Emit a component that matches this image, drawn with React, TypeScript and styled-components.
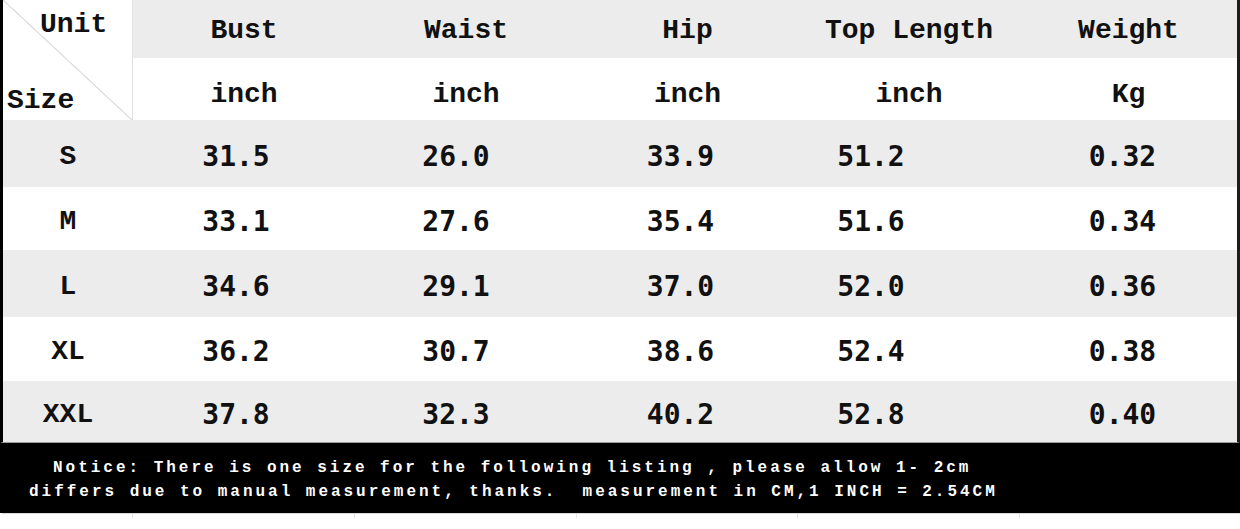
import React from 'react';
import styled, { createGlobalStyle } from 'styled-components';

const GlobalStyle = createGlobalStyle`
  html, body { margin: 0; padding: 0; background: #fff; }
  body { width: 1240px; height: 529px; overflow: hidden; }
  * { box-sizing: border-box; }
`;

const COLS = '130px 222px 222px 221px 222px 217px';

const Sheet = styled.div`
  width: 1240px;
  display: flex;
  flex-direction: column;
  font-family: "Liberation Mono", "DejaVu Sans Mono", monospace;
  color: #111;
`;

const Table = styled.div`
  display: flex;
  flex-direction: column;
  border-left: 3px solid #000;
  border-right: 3px solid #1c1c1c;
  border-bottom: 1px solid #9c9c9c;
`;

const Header = styled.div`
  display: grid;
  grid-template-columns: ${COLS};
  grid-template-rows: 58px 62px;
`;

const Corner = styled.div`
  grid-row: 1 / span 2;
  grid-column: 1;
  display: flex;
  flex-direction: column;
  justify-content: space-between;
  background-color: #fff;
  background-image: linear-gradient(
    to top right,
    transparent calc(50% - 1px),
    #d4d4d4 50%,
    transparent calc(50% + 1px)
  );
  border-right: 1px solid #e2e2e2;
`;

const CornerLabel = styled.span<{ $pos: 'top' | 'bottom' }>`
  font-size: 28px;
  line-height: 28px;
  font-weight: bold;
  padding: ${(p) => (p.$pos === 'top' ? '11px 0 0 37px' : '0 0 5px 4px')};
`;

const HeadCell = styled.div<{ $tone: 'gray' | 'white'; $shift: number }>`
  display: flex;
  align-items: center;
  justify-content: center;
  background: ${(p) => (p.$tone === 'gray' ? '#ececec' : '#fff')};
  font-size: 28px;
  line-height: 28px;
  font-weight: bold;
  padding-top: ${(p) => p.$shift}px;
`;

const Row = styled.div<{ $tone: 'gray' | 'white'; $h: number }>`
  display: grid;
  grid-template-columns: ${COLS};
  height: ${(p) => p.$h}px;
  background: ${(p) => (p.$tone === 'gray' ? '#ececec' : '#fff')};
`;

const SizeCell = styled.div`
  display: flex;
  align-items: center;
  justify-content: center;
  font-size: 28px;
  line-height: 28px;
  font-weight: bold;
  padding-top: 6px;
`;

const ValueCell = styled.div<{ $nudge: number }>`
  display: flex;
  align-items: center;
  justify-content: center;
  font-family: "DejaVu Sans Mono", "Liberation Mono", monospace;
  font-size: 28px;
  line-height: 28px;
  font-weight: bold;
  padding-top: 6px;
  padding-right: ${(p) => p.$nudge}px;
`;

const Notice = styled.div`
  height: 70px;
  background: #000;
  color: #fff;
  font-size: 16px;
  line-height: 24px;
  font-weight: bold;
  letter-spacing: 2.98px;
  padding: 13px 0 0 29px;
  white-space: pre;
  display: flex;
  flex-direction: column;
`;

const NoticeLine = styled.span<{ $indent: number }>`
  padding-left: ${(p) => p.$indent}px;
`;

const Footer = styled.div`
  display: grid;
  grid-template-columns: ${COLS};
  height: 16px;
  margin-left: 2px;
  border-top: 1px solid #dadada;
`;

const Tick = styled.div<{ $first: boolean }>`
  height: 4px;
  border-left: ${(p) => (p.$first ? 'none' : '1px solid #e4e4e4')};
`;

const columns = [
  { title: 'Bust', unit: 'inch', nudge: 16 },
  { title: 'Waist', unit: 'inch', nudge: 20 },
  { title: 'Hip', unit: 'inch', nudge: 14 },
  { title: 'Top Length', unit: 'inch', nudge: 76 },
  { title: 'Weight', unit: 'Kg', nudge: 12 },
];

const rows: { size: string; values: string[]; h: number }[] = [
  { size: 'S', values: ['31.5', '26.0', '33.9', '51.2', '0.32'], h: 67 },
  { size: 'M', values: ['33.1', '27.6', '35.4', '51.6', '0.34'], h: 63 },
  { size: 'L', values: ['34.6', '29.1', '37.0', '52.0', '0.36'], h: 67 },
  { size: 'XL', values: ['36.2', '30.7', '38.6', '52.4', '0.38'], h: 64 },
  { size: 'XXL', values: ['37.8', '32.3', '40.2', '52.8', '0.40'], h: 61 },
];

export default function App() {
  return (
    <>
      <GlobalStyle />
      <Sheet>
        <Table>
          <Header>
            <Corner>
              <CornerLabel $pos="top">Unit</CornerLabel>
              <CornerLabel $pos="bottom">Size</CornerLabel>
            </Corner>
            {columns.map((c) => (
              <HeadCell key={c.title} $tone="gray" $shift={3}>
                {c.title}
              </HeadCell>
            ))}
            {columns.map((c) => (
              <HeadCell key={c.title + '-u'} $tone="white" $shift={11}>
                {c.unit}
              </HeadCell>
            ))}
          </Header>
          {rows.map((r, i) => (
            <Row key={r.size} $tone={i % 2 === 0 ? 'gray' : 'white'} $h={r.h}>
              <SizeCell>{r.size}</SizeCell>
              {r.values.map((v, j) => (
                <ValueCell key={j} $nudge={columns[j].nudge}>
                  {v}
                </ValueCell>
              ))}
            </Row>
          ))}
        </Table>
        <Notice>
          <NoticeLine $indent={24}>
            Notice: There is one size for the following listing , please allow 1- 2cm
          </NoticeLine>
          <NoticeLine $indent={0}>
            differs due to manual measurement, thanks.  measurement in CM,1 INCH = 2.54CM
          </NoticeLine>
        </Notice>
        <Footer>
          {[0, 1, 2, 3, 4, 5].map((k) => (
            <Tick key={k} $first={k === 0} />
          ))}
        </Footer>
      </Sheet>
    </>
  );
}
